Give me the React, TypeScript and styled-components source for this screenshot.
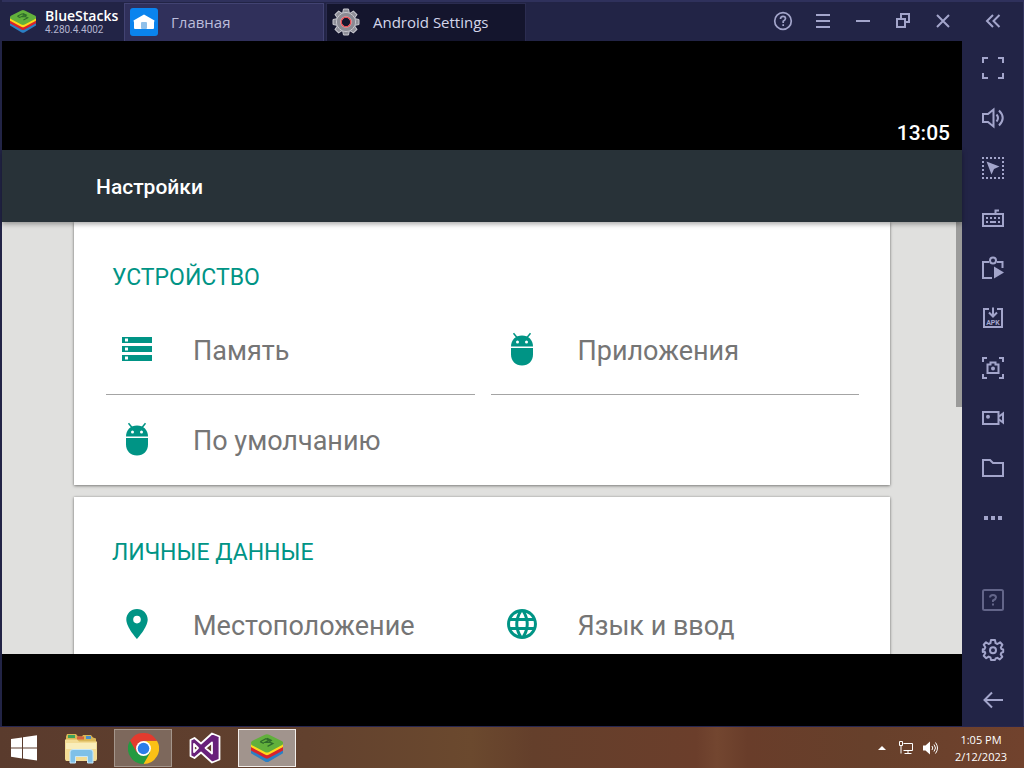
import React from 'react';
import styled, { createGlobalStyle } from 'styled-components';

const GlobalStyle = createGlobalStyle`
  *, *::before, *::after { box-sizing: border-box; }
  html, body, #root { height: 100%; }
  body { margin: 0; background: #000; }
  button { margin: 0; padding: 0; border: 0; background: none; font: inherit; color: inherit; cursor: pointer; }
  svg { display: block; flex: none; }
  h1, h2, p { margin: 0; font-weight: 400; }
`;

const uiFont = `'Open Sans', 'Noto Sans', sans-serif`;

const Desktop = styled.div`
  display: flex;
  flex-direction: column;
  height: 100vh;
  overflow: hidden;
  font-family: ${uiFont};
`;

/* ---------- Emulator window ---------- */

const EmulatorWindow = styled.main`
  flex: 1;
  min-height: 0;
  display: flex;
  background: #222446;
  border-bottom: 1px solid #27264f;
`;

const MainColumn = styled.div`
  flex: 1;
  min-width: 0;
  display: flex;
  flex-direction: column;
  padding-left: 2px;
`;

const TitleBar = styled.header`
  flex: none;
  height: 41px;
  display: flex;
  align-items: stretch;
  border-top: 2px solid #2f315c;
`;

const Brand = styled.div`
  width: 122px;
  display: flex;
  align-items: center;
  gap: 9px;
  padding-left: 8px;
`;

const BrandText = styled.div`
  display: flex;
  flex-direction: column;
`;

const BrandName = styled.span`
  font-size: 14px;
  line-height: 17px;
  font-weight: 600;
  color: #fff;
`;

const BrandVersion = styled.span`
  font-family: Roboto, sans-serif;
  font-size: 10px;
  line-height: 12px;
  color: #b4b4cf;
`;

const Tab = styled.button<{ $active?: boolean }>`
  display: flex;
  align-items: center;
  gap: 13px;
  width: 200px;
  margin: 1px 2px 0 0;
  padding: 0 0 2px 5px;
  font-size: 15px;
  line-height: 20px;
  color: ${(p) => (p.$active ? '#d3d5ea' : '#bcbddb')};
  background: ${(p) => (p.$active ? '#14152d' : '#30305b')};
  border: 1px solid ${(p) => (p.$active ? '#2b2c50' : '#424372')};
  border-bottom: 0;
`;

const WindowControls = styled.div`
  margin-left: auto;
  display: flex;
`;

const ControlButton = styled.button`
  width: 40px;
  display: flex;
  align-items: center;
  justify-content: center;
  padding: 0 0 2px 2px;
  color: #a3a5cb;
`;

/* ---------- Android screen ---------- */

const Screen = styled.section`
  flex: 1;
  min-height: 0;
  display: flex;
  flex-direction: column;
  background: #000;
  font-family: Roboto, sans-serif;
`;

const StatusBar = styled.div`
  flex: none;
  height: 109px;
  display: flex;
  align-items: flex-end;
  justify-content: flex-end;
  padding: 0 12px 5px;
  color: #fff;
  font-size: 21px;
  line-height: 24px;
  font-weight: 500;
`;

const ActionBar = styled.div`
  position: relative;
  flex: none;
  height: 72px;
  display: flex;
  align-items: center;
  padding: 2px 0 0 94px;
  background: #283238;
  box-shadow: 0 2px 5px rgba(0, 0, 0, 0.35);
`;

const ScreenTitle = styled.h1`
  font-size: 21px;
  line-height: 24px;
  font-weight: 500;
  color: #fff;
`;

const Content = styled.div`
  flex: 1;
  min-height: 0;
  display: flex;
  overflow: hidden;
  background: #e0e0de;
`;

const Cards = styled.div`
  flex: 1;
  display: flex;
  flex-direction: column;
  gap: 12px;
  padding: 0 66px 0 72px;
`;

const Card = styled.section`
  flex: none;
  padding: 0 31px 0 32px;
  background: #fff;
  box-shadow: 0 1px 3px rgba(0, 0, 0, 0.4), 0 0 2px rgba(0, 0, 0, 0.2);
`;

const CardTitle = styled.h2`
  height: 83px;
  padding: 42px 6px 0;
  font-size: 23px;
  line-height: 28px;
  color: #009485;
`;

const Grid = styled.div`
  display: grid;
  grid-template-columns: 1fr 1fr;
  column-gap: 16px;
`;

const Tile = styled.button<{ $divided?: boolean }>`
  display: flex;
  align-items: center;
  gap: 40px;
  height: 90px;
  padding: 2px 0 0 15px;
  text-align: left;
  font-size: 27px;
  line-height: 32px;
  color: #757575;
  border-bottom: 1px solid ${(p) => (p.$divided ? '#a4a4a4' : 'transparent')};

  svg {
    margin-bottom: 4px;
    color: #009485;
  }
`;

const ScrollTrack = styled.div`
  flex: none;
  width: 6px;
`;

const ScrollThumb = styled.div`
  height: 185px;
  background: #9b9b9a;
`;

const NavArea = styled.div`
  flex: none;
  height: 72px;
`;

/* ---------- Side toolbar ---------- */

const Sidebar = styled.aside`
  flex: none;
  width: 62px;
  display: flex;
  flex-direction: column;
  padding-bottom: 1px;
  border-top: 2px solid #2f315c;
  border-right: 1px solid #34355f;
  color: #a3a5cb;
`;

const CollapseButton = styled.button`
  height: 41px;
  display: flex;
  align-items: center;
  justify-content: center;
  padding-bottom: 3px;
`;

const ToolButton = styled.button<{ $dim?: boolean }>`
  height: 50px;
  display: flex;
  align-items: center;
  justify-content: center;
  opacity: ${(p) => (p.$dim ? 0.5 : 1)};
`;

const ToolSpacer = styled.div`
  flex: 1;
`;

/* ---------- Taskbar ---------- */

const Taskbar = styled.footer`
  flex: none;
  height: 41px;
  display: flex;
  align-items: stretch;
  gap: 4px;
  background: linear-gradient(90deg, #5a3b2d 0%, #62412e 30%, #6b492e 46%, #643f2b 52%, #6b3e2b 68%, #734630 70%, #693d2a 73%, #67402b 85%, #71422d 100%);
`;

const StartButton = styled.button`
  width: 48px;
  display: flex;
  align-items: center;
  justify-content: center;
`;

const TaskButton = styled.button<{ $state?: 'open' | 'focused' }>`
  width: 58px;
  margin: 2px 0 1px;
  display: flex;
  align-items: center;
  justify-content: center;
  border: 1px solid
    ${(p) => (p.$state === 'focused' ? '#f3eeea' : p.$state === 'open' ? '#a4958b' : 'transparent')};
  background: ${(p) => (p.$state === 'focused' ? '#a1948d' : p.$state === 'open' ? '#7d685c' : 'transparent')};
`;

const Tray = styled.div`
  margin-left: auto;
  display: flex;
  align-items: center;
  color: #fff;
`;

const TrayButton = styled.button`
  width: 24px;
  height: 40px;
  display: flex;
  align-items: center;
  justify-content: center;
`;

const Clock = styled.time`
  width: 82px;
  padding-right: 4px;
  text-align: center;
  font-size: 11px;
  line-height: 17px;
  color: #fff;
`;

const ClockLine = styled.span`
  display: block;
`;

/* ---------- Icons ---------- */

const Line = ({ children, size = 24, width = 2 }: { children: React.ReactNode; size?: number; width?: number }) => (
  <svg width={size} height={size} viewBox={`0 0 ${size} ${size}`} fill="none" stroke="currentColor" strokeWidth={width} aria-hidden="true">
    {children}
  </svg>
);

const StackLogo = ({ width }: { width: number }) => (
  <svg width={width} height={width * 0.9} viewBox="0 0 30 27" aria-hidden="true">
    <path d="M0 15v3l13.500 8q1.500.8 3 0L30 18v-3l-15 7z" fill="#2b7fc4" />
    <path d="M0 12v3.400l13.500 7.300q1.500.8 3 0L30 15.400V12l-15 7z" fill="#d8232c" />
    <path d="M0 8.500v3.800l13.500 7.200q1.500.8 3 0L30 12.300V8.500l-15 7z" fill="#ffd91c" />
    <path d="M1 6.600 13 .6q2-1 4 .1l12.200 6q1.600 1.200.4 3.400L17 16.800q-2 1-4 0L.4 10.200Q-.6 7.800 1 6.600z" fill="#62b03c" />
    <path d="m9 7 5-2.600 3 1.400-3.500 1.800 4.500.2 2.500 1.200-5 2.600M8.500 7.200l3.500 1.700M15 4l4 2-2 1.500" fill="none" stroke="#2f6b2b" strokeWidth="1.200" />
  </svg>
);

const HomeLogo = () => (
  <svg width="28" height="28" viewBox="0 0 28 28" aria-hidden="true">
    <rect width="28" height="28" rx="3" fill="#0a84ee" />
    <path d="M3.500 12.500 14 6.500l10.500 6-.5 2V20q0 1-1 1H5q-1 0-1-1v-5.500z" fill="#fff" />
    <rect x="11" y="14" width="6" height="7" rx="1" fill="#8fc0ea" />
  </svg>
);

const GearLogo = () => (
  <svg width="28" height="28" viewBox="-14 -14 28 28" aria-hidden="true">
    <g fill="#8f8f98" stroke="#c9c9d0" strokeWidth="1">
      {[0, 45, 90, 135, 180, 225, 270, 315].map((a) => (
        <path key={a} transform={`rotate(${a})`} d="M-3.500-8 -2.500-13h5l1 5z" />
      ))}
      <circle r="9.500" />
    </g>
    <circle r="9" fill="#8a8a93" />
    <circle r="5" fill="#14152d" stroke="#f4bfc2" strokeWidth="1.500" />
    <circle r="4.800" fill="none" stroke="#e2464e" strokeWidth="1.200" />
  </svg>
);

const AndroidIcon = () => (
  <svg width="32" height="34" viewBox="0 0 32 34" aria-hidden="true">
    <path d="M5 14.500C5 8 9.500 3.500 16 3.500S27 8 27 14.500z" fill="currentColor" />
    <path d="M5 16h22v6.500c0 6.500-4.500 11-11 11S5 29 5 22.500z" fill="currentColor" />
    <path d="M7.500 1.200 11 5.500M24.500 1.200 21 5.500" stroke="currentColor" strokeWidth="1.500" />
    <circle cx="11.500" cy="10" r="1.500" fill="#fff" />
    <circle cx="20.500" cy="10" r="1.500" fill="#fff" />
  </svg>
);

const StorageIcon = () => (
  <svg width="32" height="32" viewBox="0 0 32 32" aria-hidden="true">
    {[4, 13, 22].map((y) => (
      <g key={y}>
        <rect x="1" y={y} width="30" height="6" fill="currentColor" />
        <rect x="4" y={y + 1.5} width="3" height="3" fill="#fff" />
      </g>
    ))}
  </svg>
);

const PinIcon = () => (
  <svg width="32" height="32" viewBox="0 0 32 32" aria-hidden="true">
    <path d="M16 1C10 1 5.300 5.700 5.300 11.600 5.300 19.500 16 31 16 31s10.700-11.500 10.700-19.400C26.700 5.700 22 1 16 1zm0 14.400a3.800 3.800 0 1 1 0-7.600 3.800 3.800 0 0 1 0 7.600z" fill="currentColor" />
  </svg>
);

const GlobeIcon = () => (
  <svg width="32" height="32" viewBox="1.300 1.300 21.400 21.400" aria-hidden="true">
    <path
      fill="currentColor"
      d="M11.990 2C6.470 2 2 6.480 2 12s4.470 10 9.990 10C17.520 22 22 17.520 22 12S17.520 2 11.990 2zm6.930 6h-2.950a15.650 15.650 0 0 0-1.380-3.560A8.030 8.030 0 0 1 18.920 8zM12 4.040c.83 1.200 1.480 2.530 1.910 3.960h-3.820c.43-1.430 1.080-2.760 1.910-3.960zM4.260 14C4.100 13.360 4 12.690 4 12s.1-1.360.26-2h3.380c-.08.66-.14 1.320-.14 2s.06 1.340.14 2H4.260zm.82 2h2.950c.32 1.250.78 2.450 1.380 3.560A7.987 7.987 0 0 1 5.080 16zm2.950-8H5.080a7.987 7.987 0 0 1 4.330-3.560A15.650 15.650 0 0 0 8.030 8zM12 19.960c-.83-1.200-1.480-2.530-1.910-3.960h3.820c-.43 1.430-1.080 2.760-1.910 3.960zM14.340 14H9.660c-.09-.66-.16-1.320-.16-2s.07-1.350.16-2h4.680c.09.65.16 1.320.16 2s-.07 1.340-.16 2zm.25 5.560c.6-1.110 1.060-2.310 1.380-3.560h2.950a8.030 8.030 0 0 1-4.330 3.560zM16.360 14c.08-.66.14-1.320.14-2s-.06-1.340-.14-2h3.380c.16.64.26 1.310.26 2s-.1 1.360-.26 2h-3.380z"
    />
  </svg>
);

const tools: { label: string; icon: React.ReactNode }[] = [
  { label: 'Fullscreen', icon: <Line><path d="M2 7V2h5M17 2h5v5M22 17v5h-5M7 22H2v-5" /></Line> },
  { label: 'Volume', icon: <Line><path d="M2 8h5l5.500-4.500v17L7 16H2zM15.500 8.500q3 3.500 0 7M18 4.500q7.500 7.500 0 15" /></Line> },
  {
    label: 'Pointer',
    icon: (
      <Line>
        <rect x="2" y="2" width="20" height="20" strokeDasharray="2 2" strokeDashoffset="1" />
        <path d="m5.500 5.500 13 5-5.500 2.500-2.500 5.500z" fill="currentColor" stroke="none" />
      </Line>
    ),
  },
  {
    label: 'Keyboard',
    icon: (
      <Line>
        <rect x="2" y="8" width="20" height="12" />
        <path d="M14.500 8V4.500H18" />
        <path d="M5 12h14" strokeDasharray="2 2" />
        <path d="M5 16h2M9 16h6M17 16h2" />
      </Line>
    ),
  },
  {
    label: 'Macro',
    icon: (
      <Line>
        <path d="M8 6H2v16h9M16 6h5.500v6" />
        <circle cx="12" cy="4.500" r="3" />
        <path d="m13 10.500 10 6-10 6z" fill="currentColor" stroke="none" />
      </Line>
    ),
  },
  {
    label: 'Install APK',
    icon: (
      <Line>
        <path d="M8 3H3v18h18V3h-5M12 1.500v8M8 6.500l4 4 4-4" />
        <text x="12" y="18.500" textAnchor="middle" fontSize="7" fontWeight="700" fontFamily="Roboto, sans-serif" fill="currentColor" stroke="none">
          APK
        </text>
      </Line>
    ),
  },
  {
    label: 'Screenshot',
    icon: (
      <Line>
        <path d="M2 6V2h4M18 2h4v4M22 18v4h-4M6 22H2v-4" />
        <path d="M6.500 8.500h3V6.500h5v2h3v8.500h-11z" />
        <circle cx="12" cy="12.500" r="2" fill="currentColor" stroke="none" />
      </Line>
    ),
  },
  {
    label: 'Record',
    icon: (
      <Line>
        <rect x="2" y="6" width="15.500" height="12" />
        <path d="M18 10.500l4-3v9l-4-3" />
        <circle cx="7" cy="10.700" r="2" fill="currentColor" stroke="none" />
      </Line>
    ),
  },
  { label: 'Media folder', icon: <Line><path d="M2 4h7l3 3h10v13H2z" /></Line> },
  { label: 'More', icon: <Line width={4}><path d="M3 12h4M10 12h4M17 12h4" /></Line> },
];

const WindowsLogo = () => (
  <svg width="28" height="28" viewBox="0 0 28 28" fill="#fff" aria-hidden="true">
    <path d="M1 5l11-1.600v10H1zM13 3.200 27 1.200v12.200H13zM1 14.400h11v10L1 22.800zM13 14.400h14v12.200l-14-2z" />
  </svg>
);

const ExplorerLogo = () => (
  <svg width="34" height="32" viewBox="0 0 34 32" aria-hidden="true">
    <path d="M2 4.500 3 2h9l2 2.500h4L19 3h8l2 2.500 3 1V29H2z" fill="#d9b656" />
    <path d="M4 3h7v3H4z" fill="#3fa35a" />
    <path d="M13 4.500h7v3h-7z" fill="#d9623f" />
    <path d="M22 4h5v3h-5z" fill="#4b8fc9" />
    <path d="M1 7.500h12l2 2h18V27q0 2-2 2H3q-2 0-2-2z" fill="#f3dc95" />
    <path d="M2 11h30v6H2z" fill="#f9edba" />
    <path d="M6 31V20q0-2.500 3-2.500h17q3 0 3 2.500v11h-5.500v-6.500h-12V31z" fill="#7fc0e8" stroke="#c9e8f8" />
  </svg>
);

const ChromeLogo = () => (
  <svg width="31" height="31" viewBox="0 0 48 48" aria-hidden="true">
    <path d="M24 24 44.800 12A24 24 0 0 1 24 48z" fill="#fbc116" />
    <path d="M24 24 3.200 12A24 24 0 0 0 24 48l10.400-18z" fill="#249a41" />
    <path d="M24 12h20.800L34.400 30z" fill="#fbc116" />
    <path d="M3.200 12 13.600 30 24 12h20.800A24 24 0 0 0 3.200 12z" fill="#e33b2e" />
    <circle cx="24" cy="24" r="11.500" fill="#fff" />
    <circle cx="24" cy="24" r="9" fill="#2b7de9" />
  </svg>
);

const VisualStudioLogo = () => (
  <svg width="34" height="34" viewBox="0 0 34 34" aria-hidden="true">
    <path
      d="M24 2.500 31.500 5.500v23L24 31.500 13 21.500 6.500 27 2.500 25V9l4-2L13 12.500zM24 11.500 17.500 17 24 22.500zM6 13v8l4-4z"
      fill="#68217a"
      fillRule="evenodd"
      stroke="#fff"
      strokeWidth="1.800"
      strokeLinejoin="round"
    />
  </svg>
);

/* ---------- Page ---------- */

const sections = [
  {
    title: 'УСТРОЙСТВО',
    tiles: [
      { label: 'Память', icon: <StorageIcon />, divided: true },
      { label: 'Приложения', icon: <AndroidIcon />, divided: true },
      { label: 'По умолчанию', icon: <AndroidIcon />, divided: false },
    ],
  },
  {
    title: 'ЛИЧНЫЕ ДАННЫЕ',
    tiles: [
      { label: 'Местоположение', icon: <PinIcon />, divided: true },
      { label: 'Язык и ввод', icon: <GlobeIcon />, divided: true },
    ],
  },
];

export default function App() {
  return (
    <Desktop>
      <GlobalStyle />
      <EmulatorWindow>
        <MainColumn>
          <TitleBar>
            <Brand>
              <StackLogo width={26} />
              <BrandText>
                <BrandName>BlueStacks</BrandName>
                <BrandVersion>4.280.4.4002</BrandVersion>
              </BrandText>
            </Brand>
            <Tab type="button">
              <HomeLogo />
              Главная
            </Tab>
            <Tab type="button" $active>
              <GearLogo />
              Android Settings
            </Tab>
            <WindowControls>
              <ControlButton type="button" aria-label="Help">
                <Line>
                  <circle cx="12" cy="12" r="8.300" strokeWidth="1.700" />
                  <path d="M9.500 10q0-2.700 2.500-2.700T14.500 9.600Q14.500 11 12.200 12.200V14M12.200 15.300v1.700" strokeWidth="1.700" />
                </Line>
              </ControlButton>
              <ControlButton type="button" aria-label="Menu">
                <Line><path d="M5 6h14M5 12h14M5 18h14" /></Line>
              </ControlButton>
              <ControlButton type="button" aria-label="Minimize">
                <Line><path d="M5 12h14" /></Line>
              </ControlButton>
              <ControlButton type="button" aria-label="Restore">
                <Line><path d="M6 10h8v8H6zM10 10V5h8v8h-4" /></Line>
              </ControlButton>
              <ControlButton type="button" aria-label="Close">
                <Line><path d="m6 6 12 12M18 6 6 18" /></Line>
              </ControlButton>
            </WindowControls>
          </TitleBar>
          <Screen>
            <StatusBar>13:05</StatusBar>
            <ActionBar>
              <ScreenTitle>Настройки</ScreenTitle>
            </ActionBar>
            <Content>
              <Cards>
                {sections.map((s) => (
                  <Card key={s.title}>
                    <CardTitle>{s.title}</CardTitle>
                    <Grid>
                      {s.tiles.map((t) => (
                        <Tile key={t.label} type="button" $divided={t.divided}>
                          {t.icon}
                          {t.label}
                        </Tile>
                      ))}
                    </Grid>
                  </Card>
                ))}
              </Cards>
              <ScrollTrack>
                <ScrollThumb />
              </ScrollTrack>
            </Content>
            <NavArea />
          </Screen>
        </MainColumn>
        <Sidebar>
          <CollapseButton type="button" aria-label="Collapse toolbar">
            <Line><path d="m12 6-6 6 6 6M18.500 6l-6 6 6 6" /></Line>
          </CollapseButton>
          {tools.map((t) => (
            <ToolButton key={t.label} type="button" aria-label={t.label}>
              {t.icon}
            </ToolButton>
          ))}
          <ToolSpacer />
          <ToolButton type="button" aria-label="Tips" $dim>
            <Line>
              <rect x="2" y="2" width="20" height="20" rx="1.500" />
              <path d="M9 9.500q0-2.500 3-2.500t3 2.500q0 1.500-3 3V14M12 15.500v2" />
            </Line>
          </ToolButton>
          <ToolButton type="button" aria-label="Settings">
            <Line>
              <path
                strokeLinejoin="round"
                d="M10 2h4l.6 3.200 1.800.8 2.700-1.700 2.300 2.500-1.600 2.600.6 1.600 1.800.4v2.700l-1.800.6-.7 1.700 1.600 2.500-2.500 2.500-2.500-1.600-1.700.7L14 22h-4l-.6-2.700-1.700-.7-2.500 1.600-2.500-2.500 1.600-2.500-.7-1.700L1.800 14v-2.700l1.800-.4.7-1.600-1.600-2.600 2.300-2.500L7.600 6l1.800-.8z"
              />
              <circle cx="12" cy="12.300" r="3" />
            </Line>
          </ToolButton>
          <ToolButton type="button" aria-label="Back">
            <Line><path d="M22 12H4M11 4.500 3.500 12l7.500 7.500" /></Line>
          </ToolButton>
        </Sidebar>
      </EmulatorWindow>
      <Taskbar>
        <StartButton type="button" aria-label="Start"><WindowsLogo /></StartButton>
        <TaskButton type="button" aria-label="File Explorer"><ExplorerLogo /></TaskButton>
        <TaskButton type="button" aria-label="Chrome" $state="open"><ChromeLogo /></TaskButton>
        <TaskButton type="button" aria-label="Visual Studio"><VisualStudioLogo /></TaskButton>
        <TaskButton type="button" aria-label="BlueStacks" $state="focused"><StackLogo width={32} /></TaskButton>
        <Tray>
          <TrayButton type="button" aria-label="Show hidden icons">
            <svg width="8" height="4" viewBox="0 0 8 4" fill="#fff" aria-hidden="true"><path d="M0 4 4 0l4 4z" /></svg>
          </TrayButton>
          <TrayButton type="button" aria-label="Network">
            <Line size={16} width={1}>
              <path d="M5.500 3.500h9v7h-9M10 10.500v3M6.500 13.500h7M1.500 1.500h3v4h-3zM3 5.500v8" />
            </Line>
          </TrayButton>
          <TrayButton type="button" aria-label="Speakers">
            <Line size={16} width={1}>
              <path d="M1 5.500h2.500L8 1.500v13l-4.500-4H1z" fill="currentColor" stroke="none" />
              <path d="M10 6q1.500 2 0 4M12 4.500q3 3.500 0 7M13.500 2.500q4 5.500 0 11" />
            </Line>
          </TrayButton>
          <Clock dateTime="2023-02-12T13:05">
            <ClockLine>1:05 PM</ClockLine>
            <ClockLine>2/12/2023</ClockLine>
          </Clock>
        </Tray>
      </Taskbar>
    </Desktop>
  );
}
